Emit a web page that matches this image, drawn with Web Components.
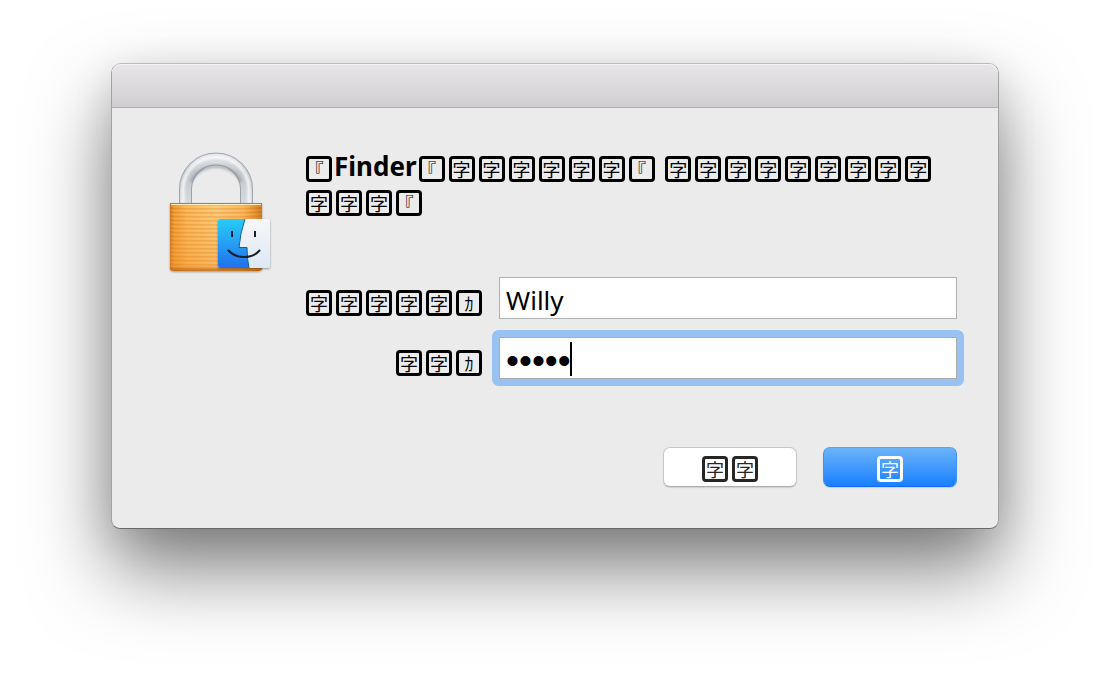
<!DOCTYPE html>
<html lang="ja">
<head>
<meta charset="utf-8">
<title>Finder</title>
<style>
body { margin: 0; padding: 63px 10% 159px; background: #fff; overflow-x: hidden; font-family: "Noto Sans", "Noto Sans CJK JP", sans-serif; font-size: 26px; color: #000; }
</style>
</head>
<body>
<auth-dialog></auth-dialog>
<script>
class GlyphRun extends HTMLElement {
  constructor() {
    super();
    this.attachShadow({ mode: "open" }).innerHTML = `<style>
        :host { display: inline; }
        span { display: inline-block; box-sizing: border-box; width: 26px; height: 26px; margin: 0 2px; border: 3px solid currentColor; border-radius: 4px; overflow: hidden; vertical-align: -6px; text-align: center; font: 400 18px/20px "Noto Sans CJK JP", sans-serif; font-feature-settings: "halt"; }
      </style>`;
    for (const char of this.getAttribute("text") || "") {
      const cell = document.createElement("span");
      cell.textContent = char;
      this.shadowRoot.append(cell);
    }
  }
}

class LockIcon extends HTMLElement {
  constructor() {
    super();
    this.attachShadow({ mode: "open" }).innerHTML = `
      <style>:host { display: block; } svg { display: block; overflow: visible; }</style>
      <svg width="102" height="122" viewBox="0 0 102 122" aria-hidden="true">
        <defs>
          <linearGradient id="metal" x1="0" x2="0" y1="0" y2="1"><stop offset="0" stop-color="#dfe2e6"/><stop offset=".3" stop-color="#c2c7ce"/><stop offset="1" stop-color="#d7dbe0"/></linearGradient>
          <linearGradient id="brass" x1="0" x2="1"><stop offset="0" stop-color="#c56a10"/><stop offset=".04" stop-color="#ee9832"/><stop offset=".18" stop-color="#fdb654"/><stop offset=".5" stop-color="#ffcb7a"/><stop offset=".8" stop-color="#fdb657"/><stop offset=".93" stop-color="#e0882a"/><stop offset="1" stop-color="#c66d14"/></linearGradient>
          <linearGradient id="shade" x1="0" x2="0" y1="0" y2="1"><stop offset="0" stop-color="#f5a23c" stop-opacity="0"/><stop offset=".92" stop-color="#ef8e25" stop-opacity=".35"/><stop offset="1" stop-color="#a95205" stop-opacity=".7"/></linearGradient>
          <pattern id="ridges" width="6" height="4" patternUnits="userSpaceOnUse"><path d="M0 1h6" stroke="#c76b11" stroke-opacity=".5"/><path d="M0 2h6" stroke="#ffe19a" stroke-opacity=".3"/></pattern>
          <linearGradient id="blue" x1="0" x2="0" y1="0" y2="1"><stop offset="0" stop-color="#28cdf8"/><stop offset="1" stop-color="#2370ed"/></linearGradient>
          <linearGradient id="pale" x1="0" x2="0" y1="0" y2="1"><stop offset="0" stop-color="#f7f7f8"/><stop offset="1" stop-color="#dce8f5"/></linearGradient>
          <filter id="soft" x="-20%" y="-20%" width="140%" height="150%"><feDropShadow dx="0" dy="1" stdDeviation="1" flood-opacity=".35"/></filter>
          <filter id="smooth" x="-20%" y="-20%" width="140%" height="140%"><feGaussianBlur stdDeviation="1"/></filter>
        </defs>
        <path d="M15.500 52V37A30.500 30 0 0 1 76.500 37V52" fill="none" stroke="#9ca3ac" stroke-width="13"/>
        <path d="M15.500 52V37A30.500 30 0 0 1 76.500 37V52" fill="none" stroke="url(#metal)" stroke-width="11"/>
        <path d="M13 52V37A33 32 0 0 1 79 37V52" fill="none" stroke="#fff" stroke-width="3" opacity=".8" filter="url(#smooth)"/>
        <path d="M21 30A27 25 0 0 1 71 30" fill="none" stroke="#7d858f" stroke-width="3" opacity=".5" filter="url(#smooth)"/>
        <g filter="url(#soft)">
          <path d="M0 51H92V117Q91 119 88 119H4Q1 119 0 117Z" fill="url(#brass)"/>
        </g>
        <path d="M0 51H92V117Q91 119 88 119H4Q1 119 0 117Z" fill="url(#ridges)"/>
        <path d="M0 51H92V117Q91 119 88 119H4Q1 119 0 117Z" fill="url(#shade)"/>
        <path d="M0 51.500H92" stroke="#c57823"/><path d="M1 52.500H91" stroke="#fff0ba"/>
        <g filter="url(#soft)">
          <rect x="48" y="67" width="52" height="49" rx="2" fill="url(#pale)"/>
          <path d="M50 67H75Q70 82 69 95.500H77Q77 107 79 116H50Q48 116 48 114V69Q48 67 50 67Z" fill="url(#blue)"/>
        </g>
        <path d="M75 67Q70 82 69 95.500H77Q77 107 79 116" fill="none" stroke="#155b97" stroke-width="1"/>
        <path d="M62 79V85M85 79V85" stroke="#17202b" stroke-width="2"/>
        <path d="M58.500 98.500Q64 105 74 105Q84 105 89.500 98.500" fill="none" stroke="#17202b" stroke-width="2" stroke-linecap="round"/>
      </svg>`;
  }
}

class PushButton extends HTMLElement {
  constructor() {
    super();
    this.attachShadow({ mode: "open" }).innerHTML = `
      <style>
        :host { display: block; width: 134px; }
        button { display: block; box-sizing: border-box; width: 100%; height: 40px; margin: 0; padding: 0 0 3px; border: 1px solid #c6c6c6; border-bottom-color: #adadad; border-radius: 7px; background: #fff; color: #262626; font: inherit; line-height: 34px; box-shadow: 0 1px 1px rgba(0,0,0,.12); }
        :host([primary]) button { border-color: #5aa5f3 #3d91f4 #1669f2; background: linear-gradient(#6cb3f9, #1980ff); color: #fff; }
      </style>
      <button type="button"><slot></slot></button>`;
  }
}

class AuthDialog extends HTMLElement {
  constructor() {
    super();
    this.attachShadow({ mode: "open" }).innerHTML = `
      <style>
        :host { display: block; box-sizing: border-box; border: 1px solid; border-color: #bcbcbc #a2a2a2 #696969; border-radius: 10px 10px 9px 9px; background: #ebebeb; background-clip: padding-box; box-shadow: 0 40px 80px rgba(0,0,0,.5), 0 10px 40px rgba(0,0,0,.1); }
        header { height: 43px; border-bottom: 1px solid #b0b0b0; border-radius: 9px 9px 0 0; background: linear-gradient(#e8e6e8, #d0ced0); box-shadow: inset 0 1px #f5f5f5; }
        main { display: grid; grid-template-columns: 102px minmax(0, 1fr); column-gap: 32px; padding: 41px 41px 41px 58px; }
        lock-icon { padding-top: 3px; }
        h1 { min-height: 128px; margin: 0; padding-right: 16px; box-sizing: border-box; font-size: 26px; line-height: 34px; font-weight: 700; }
        form { display: grid; grid-template-columns: 180px minmax(0, 1fr); gap: 18px 15px; align-items: center; }
        label { text-align: right; line-height: 34px; padding-top: 4px; white-space: nowrap; }
        .field { position: relative; }
        input { display: block; box-sizing: border-box; width: 100%; height: 42px; margin: 0; padding: 3px 6px 0; border: 1px solid #b1b1b1; border-radius: 0; background: #fff; color: #000; font: inherit; line-height: 36px; outline: 0; }
        .active input { padding-top: 6px; font: 37px/34px "Liberation Sans", sans-serif; border-color: #acacac; caret-color: transparent; }
        .active { box-shadow: 0 0 0 7px #97c2f2; border-radius: 2px; }
        .caret { position: absolute; left: 71px; top: 5px; width: 2px; height: 34px; background: #000; }
        footer { grid-column: 1 / -1; display: flex; justify-content: flex-end; gap: 26px; padding-top: 68px; }
      </style>
      <header></header>
      <main>
        <lock-icon></lock-icon>
        <section>
          <h1><glyph-run text="『"></glyph-run>Finder<glyph-run text="『字字字字字字『"></glyph-run> <glyph-run text="字字字字字字字字字字字字『"></glyph-run></h1>
          <form>
            <label for="user"><glyph-run text="字字字字字ｶ"></glyph-run></label>
            <div class="field"><input id="user" type="text" value="Willy"></div>
            <label for="pass"><glyph-run text="字字ｶ"></glyph-run></label>
            <div class="field active"><input id="pass" type="password" value="12345"><span class="caret"></span></div>
          </form>
        </section>
        <footer>
          <push-button><glyph-run text="字字"></glyph-run></push-button>
          <push-button primary><glyph-run text="字"></glyph-run></push-button>
        </footer>
      </main>`;
  }
}
customElements.define("glyph-run", GlyphRun);
customElements.define("lock-icon", LockIcon);
customElements.define("push-button", PushButton);
customElements.define("auth-dialog", AuthDialog);
</script>
</body>
</html>
